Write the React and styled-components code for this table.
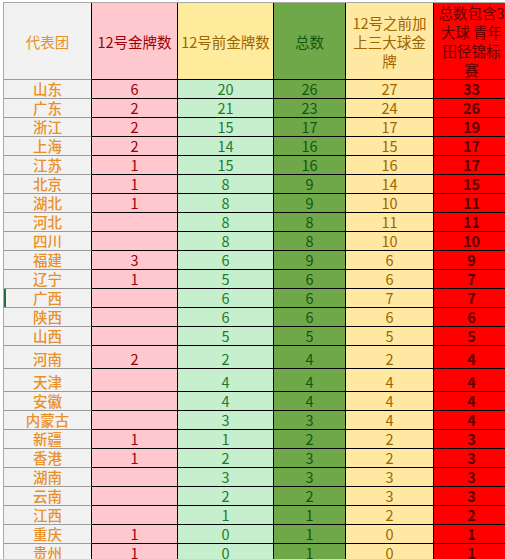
import React from "react";
import styled, { createGlobalStyle } from "styled-components";

const Global = createGlobalStyle`
  html, body { margin: 0; padding: 0; background: #ffffff; }
  body { font-family: "Noto Sans CJK SC", "Noto Sans", sans-serif; }
`;

const Page = styled.div`
  width: 505px;
  height: 559px;
  overflow: hidden;
  padding: 2px 0 0 3px;
  box-sizing: border-box;
  background: #ffffff;
`;

const Sheet = styled.div`
  display: grid;
  grid-template-columns: 88px 86px 96px 72px 88px 76px;
  width: max-content;
  border-top: 1px solid #a8a8a8;
  border-left: 1px solid #a8a8a8;
`;

const COLS = [
  { bg: "#f2f2f2", color: "#e8902a", line: "#9a9a9a", weight: 500 },
  { bg: "#ffc7ce", color: "#9c0006", line: "#000" },
  { bg: "#c6efce", color: "#1f7a2c", line: "#000", headBg: "#ffeb9c", headColor: "#9c6500" },
  { bg: "#6ea849", color: "#13570e", line: "#000" },
  { bg: "#ffe9a2", color: "#9c6500", line: "#000" },
  { bg: "#ff0000", color: "#5c0000", line: "#000", weight: 700, headWeight: 400 },
];

const Cell = styled.div`
  box-sizing: border-box;
  height: ${(p) => p.$h}px;
  background: ${(p) => p.$bg};
  color: ${(p) => p.$color};
  border-right: 1px solid #000;
  border-bottom: 1px solid ${(p) => p.$line};
  display: flex;
  align-items: flex-end;
  justify-content: center;
  font-size: 14.5px;
  line-height: 18px;
  font-weight: ${(p) => p.$weight || 400};
  white-space: nowrap;
  box-shadow: ${(p) => (p.$active ? "inset 2px 0 0 #1e7145" : "none")};
`;

const HeadCell = styled.div`
  box-sizing: border-box;
  height: 77px;
  background: ${(p) => p.$bg};
  color: ${(p) => p.$color};
  border-right: 1px solid #000;
  border-bottom: 1px solid ${(p) => p.$line};
  display: flex;
  align-items: center;
  justify-content: center;
  text-align: center;
  font-size: 14.5px;
  line-height: 19px;
  font-weight: ${(p) => p.$weight || 400};
  white-space: pre;
`;

const headers = [
  ["代表团"],
  ["12号金牌数"],
  ["12号前金牌数"],
  ["总数"],
  ["12号之前加", "上三大球金", "牌"],
  ["总数包含3", "大球 青年", "田径锦标", "赛"],
];

const rows = [
  ["山东", "6", "20", "26", "27", "33"],
  ["广东", "2", "21", "23", "24", "26"],
  ["浙江", "2", "15", "17", "17", "19"],
  ["上海", "2", "14", "16", "15", "17"],
  ["江苏", "1", "15", "16", "16", "17"],
  ["北京", "1", "8", "9", "14", "15"],
  ["湖北", "1", "8", "9", "10", "11"],
  ["河北", "", "8", "8", "11", "11"],
  ["四川", "", "8", "8", "10", "10"],
  ["福建", "3", "6", "9", "6", "9"],
  ["辽宁", "1", "5", "6", "6", "7"],
  ["广西", "", "6", "6", "7", "7"],
  ["陕西", "", "6", "6", "6", "6"],
  ["山西", "", "5", "5", "5", "5"],
  ["河南", "2", "2", "4", "2", "4", 23],
  ["天津", "", "4", "4", "4", "4", 23],
  ["安徽", "", "4", "4", "4", "4"],
  ["内蒙古", "", "3", "3", "4", "4"],
  ["新疆", "1", "1", "2", "2", "3"],
  ["香港", "1", "2", "3", "2", "3"],
  ["湖南", "", "3", "3", "3", "3"],
  ["云南", "", "2", "2", "3", "3"],
  ["江西", "", "1", "1", "2", "2"],
  ["重庆", "1", "0", "1", "0", "1"],
  ["贵州", "1", "0", "1", "0", "1"],
];

export default function App() {
  return (
    <>
      <Global />
      <Page>
        <Sheet>
          {headers.map((lines, i) => {
            const c = COLS[i];
            return (
              <HeadCell
                key={"h" + i}
                $bg={c.headBg || c.bg}
                $color={c.headColor || c.color}
                $line={c.line}
                $weight={c.headWeight || 400}
              >
                <div>
                  {lines.map((l, j) => (
                    <div key={j}>{l}</div>
                  ))}
                </div>
              </HeadCell>
            );
          })}
          {rows.map((r, ri) =>
            r.slice(0, 6).map((v, ci) => {
              const c = COLS[ci];
              return (
                <Cell
                  key={ri + "-" + ci}
                  $h={r[6] || 19}
                  $bg={c.bg}
                  $color={c.color}
                  $line={c.line}
                  $weight={c.weight}
                  $active={ci === 0 && r[0] === "广西"}
                >
                  {v}
                </Cell>
              );
            })
          )}
        </Sheet>
      </Page>
    </>
  );
}
